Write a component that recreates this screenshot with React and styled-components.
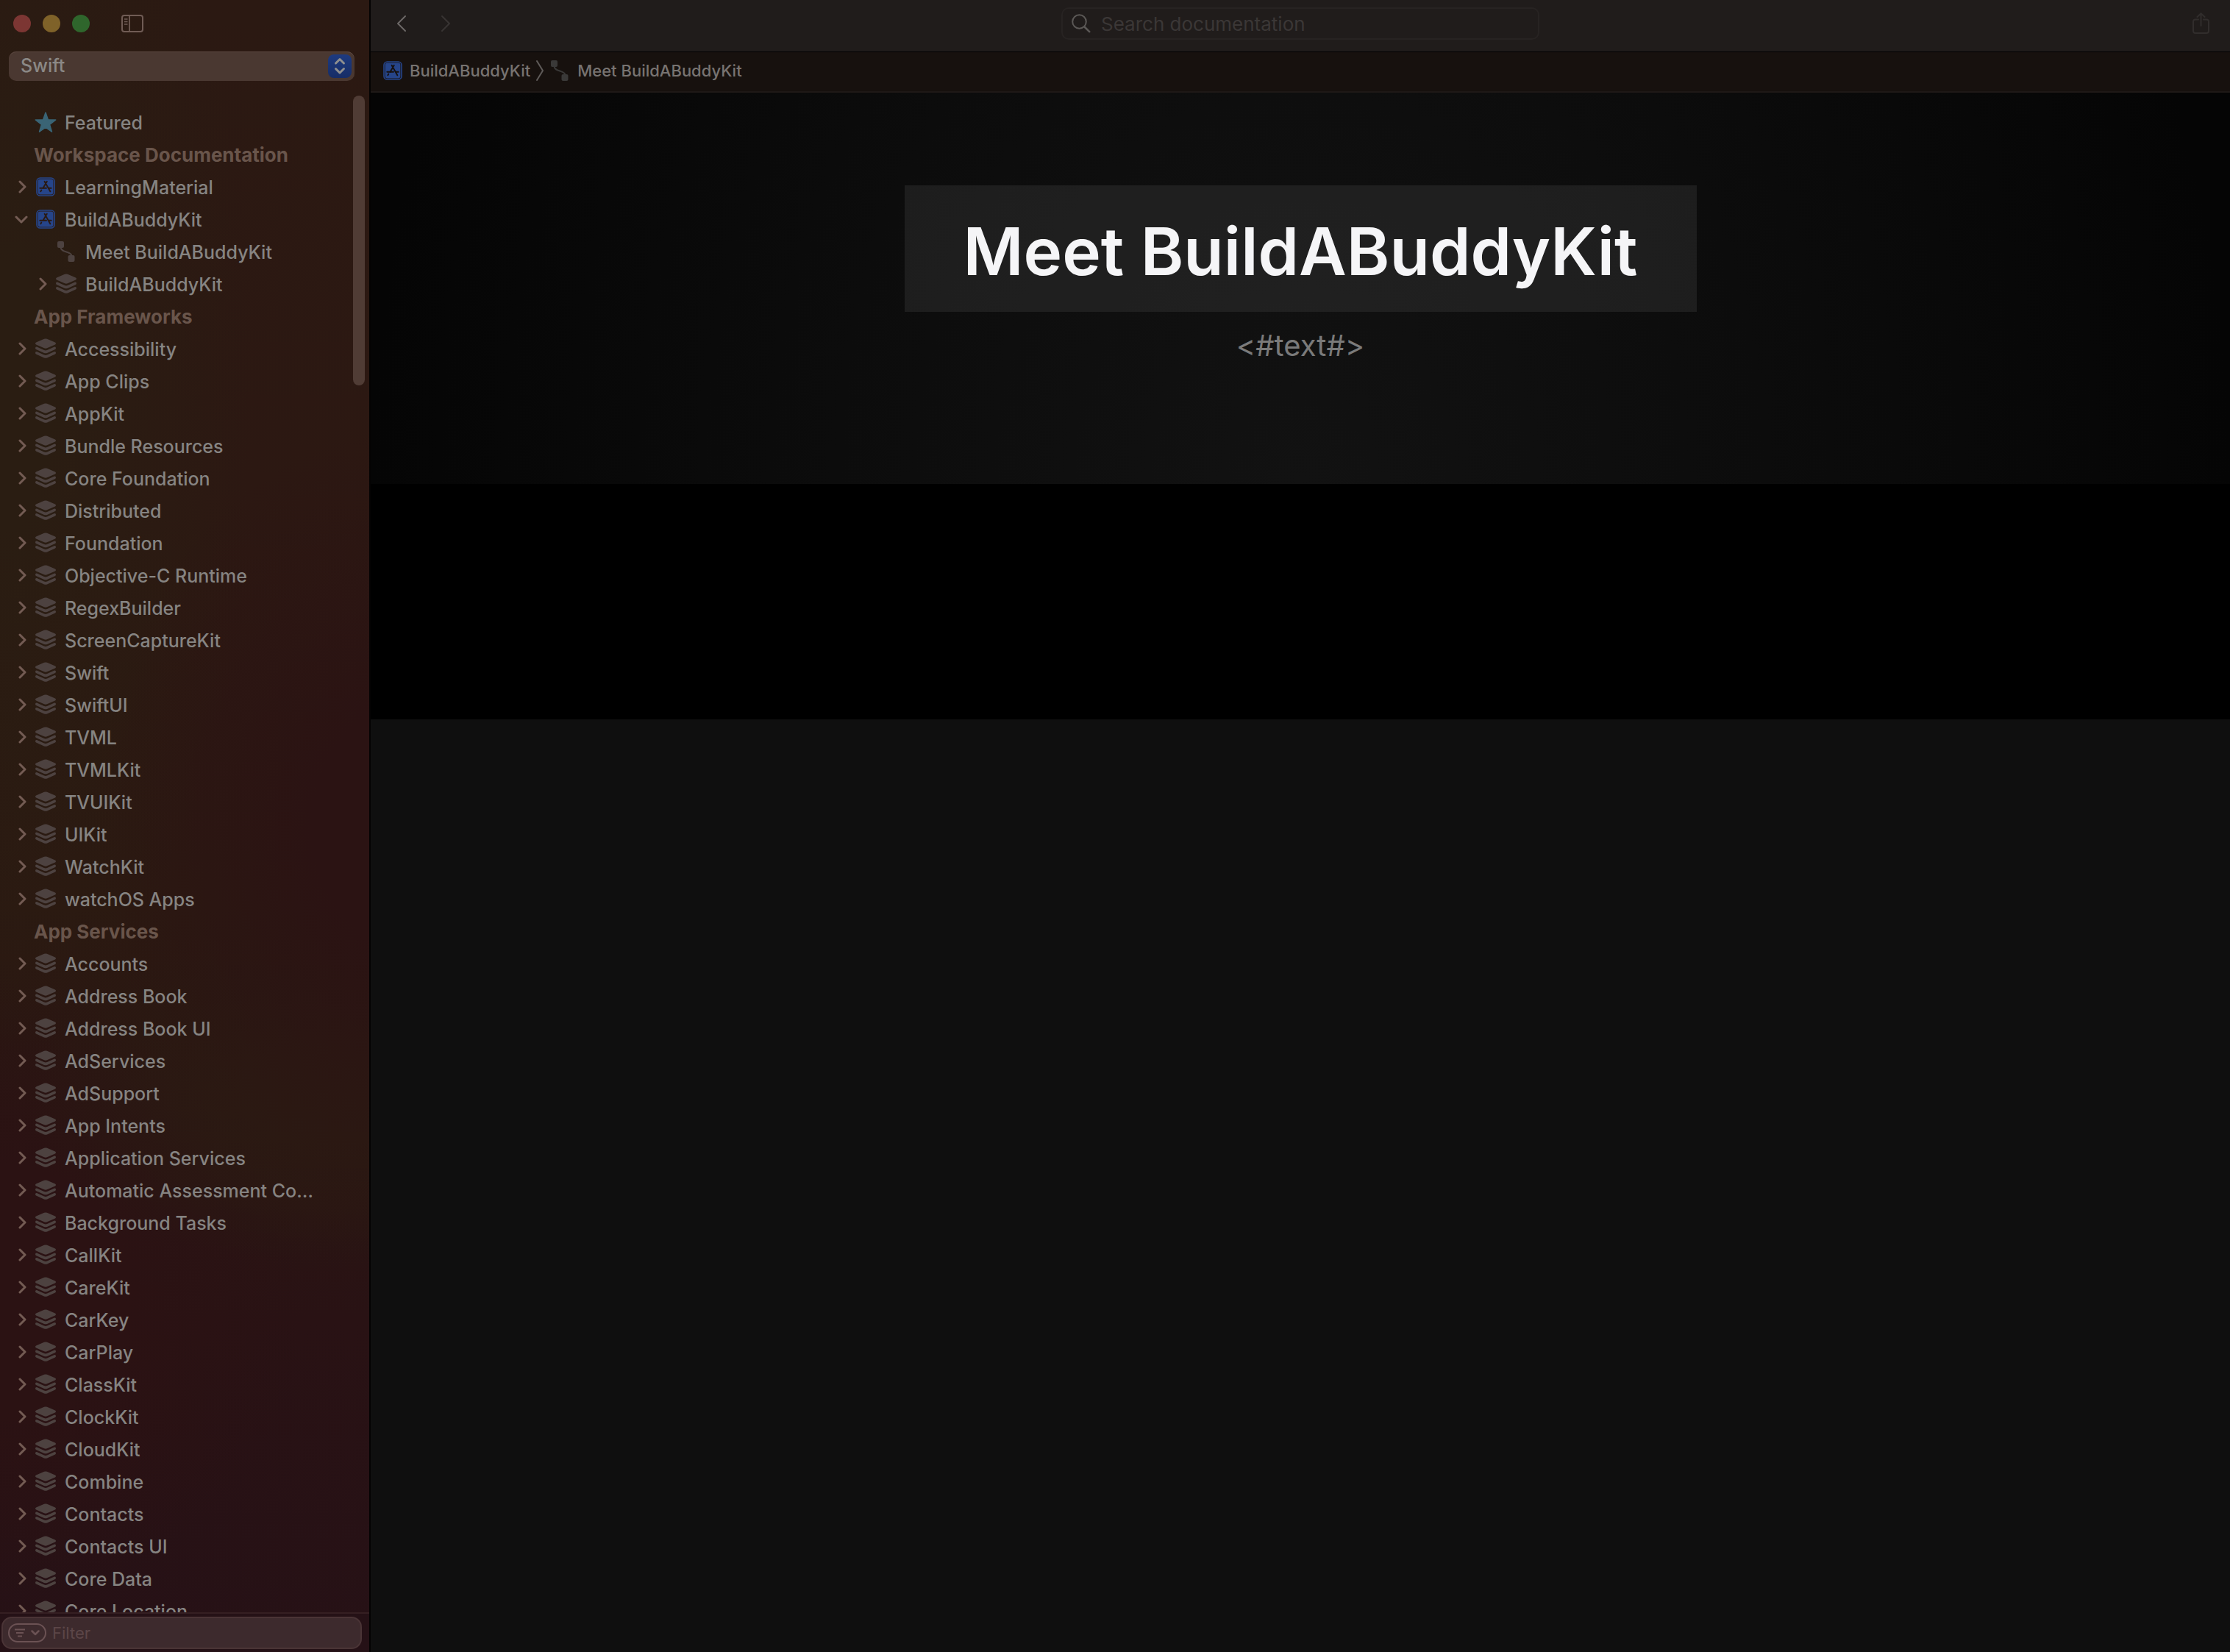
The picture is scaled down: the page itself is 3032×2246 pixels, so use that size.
import React from "react";
import styled, { createGlobalStyle } from "styled-components";

const Global = createGlobalStyle`
  * { box-sizing: border-box; }
  body { margin: 0; background: #0f0f0f; font-family: Inter, "Liberation Sans", sans-serif; }
  button, input, select { font: inherit; color: inherit; }
  ul { list-style: none; margin: 0; padding: 0; }
`;

const Window = styled.div`
  display: grid;
  grid-template-columns: 504px minmax(0, 1fr);
  height: 100vh;
  overflow: hidden;
`;

const Sidebar = styled.aside`
  display: flex;
  flex-direction: column;
  min-height: 0;
  border-right: 2px solid #040303;
  background:
    radial-gradient(ellipse 420px 540px at 110% 50%, #2b1313 30%, transparent 100%),
    radial-gradient(ellipse 420px 240px at 90% 66%, #2b1a12 30%, transparent 100%),
    radial-gradient(ellipse 420px 420px at 0% 78%, #2b1213 40%, transparent 100%),
    radial-gradient(ellipse 340px 900px at 0% 24%, #2a1d12 20%, transparent 100%),
    linear-gradient(180deg, #2b1912 0%, #2c1812 30%, #2b1911 55%, #2a1612 66%, #291214 80%, #261116 100%);
`;

const TitleBar = styled.div`
  display: flex;
  align-items: center;
  height: 64px;
  padding-left: 18px;
  gap: 16px;
`;

const Light = styled.button`
  width: 24px;
  height: 24px;
  padding: 0;
  border: 0;
  border-radius: 50%;
  background: ${(p) => p.$color};
`;

const IconButton = styled.button`
  display: flex;
  align-items: center;
  justify-content: center;
  padding: 0;
  border: 0;
  background: none;
  color: ${(p) => p.$color};
  margin-left: ${(p) => p.$push || 0}px;
`;

const LanguagePicker = styled.div`
  display: grid;
  height: 40px;
  margin: 6px 20px 0 12px;
  flex: none;
`;

const LanguageSelect = styled.select`
  grid-area: 1 / 1;
  appearance: none;
  width: 100%;
  height: 40px;
  padding: 0 60px 2px 16px;
  border: 0;
  border-radius: 10px;
  background: #4a3831;
  box-shadow: inset 0 1px 0 #5d4942;
  color: #8b8886;
  font-size: 25px;
  font-weight: 500;
`;

const Stepper = styled.span`
  grid-area: 1 / 1;
  justify-self: end;
  align-self: center;
  display: flex;
  align-items: center;
  justify-content: center;
  width: 32px;
  height: 32px;
  margin-right: 4px;
  border-radius: 8px;
  background: linear-gradient(#1d3a80, #172d66);
  pointer-events: none;
`;

const Scroller = styled.nav`
  position: relative;
  flex: 1;
  min-height: 0;
  margin-top: 20px;
  padding-top: 14px;
  overflow: hidden;
`;

const ScrollThumb = styled.span`
  position: absolute;
  top: 0;
  right: 6px;
  width: 16px;
  height: 394px;
  border-radius: 8px;
  background: #503c35;
`;

const Group = styled.h2`
  margin: 0;
  padding: 2px 0 0 46px;
  font-size: 26px;
  font-weight: 700;
  line-height: 42px;
  color: #69554b;
`;

const Row = styled.li`
  display: grid;
  grid-template-columns: 20px 28px minmax(0, 1fr);
  align-items: center;
  justify-items: center;
  column-gap: 8px;
  height: 44px;
  padding-left: ${(p) => 20 + p.$level * 28}px;
  padding-right: 68px;
`;

const Disclosure = styled.button`
  display: flex;
  justify-content: center;
  width: 20px;
  padding: 0;
  border: 0;
  background: none;
  color: #735b53;
`;

const RowLink = styled.a`
  justify-self: stretch;
  padding: 2px 0 0 4px;
  overflow: hidden;
  text-overflow: ellipsis;
  white-space: nowrap;
  text-decoration: none;
  color: #868482;
  font-size: 25px;
  font-weight: 500;
  line-height: 42px;
`;

const FilterBar = styled.div`
  flex: none;
  padding: 4px 10px 4px 2px;
  border-top: 2px solid #351f22;
  background: #251116;
`;

const FilterField = styled.div`
  display: flex;
  align-items: center;
  gap: 8px;
  height: 44px;
  padding-left: 7px;
  border: 2px solid #4a3436;
  border-radius: 14px;
  background: #3d2a2d;
`;

const FilterMenu = styled.button`
  display: flex;
  align-items: center;
  justify-content: center;
  gap: 8px;
  width: 52px;
  height: 26px;
  padding: 0;
  border: 2px solid #6b5254;
  border-radius: 13px;
  background: none;
  color: #6b5254;
`;

const TextInput = styled.input`
  flex: 1;
  min-width: 0;
  padding: 0;
  border: 0;
  outline: 0;
  background: none;
  font-size: ${(p) => p.$size}px;
  color: #868482;
  &::placeholder { color: ${(p) => p.$hint}; opacity: 1; }
`;

const Main = styled.main`
  display: flex;
  flex-direction: column;
  min-width: 0;
  background: #0f0f0f;
`;

const Toolbar = styled.header`
  display: grid;
  grid-template-columns: 1fr 650px 1fr;
  align-items: center;
  height: 71px;
  padding: 0 27px 6px;
  border-bottom: 1px solid #000;
  background: #201c1b;
`;

const NavButtons = styled.div`
  display: flex;
  gap: 46px;
  padding-left: 8px;
`;

const SearchField = styled.label`
  display: flex;
  align-items: center;
  gap: 14px;
  height: 44px;
  padding: 0 12px;
  border: 2px solid #272322;
  border-radius: 10px;
`;

const ToolbarEnd = styled.div`
  display: flex;
  justify-content: flex-end;
`;

const Breadcrumbs = styled.nav`
  display: flex;
  align-items: center;
  height: 55px;
  padding: 0 17px 4px;
  gap: 8px;
  border-bottom: 2px solid #1f1917;
  background: #17110e;
  color: #5f5b59;
`;

const Crumb = styled.a`
  display: flex;
  align-items: center;
  gap: 10px;
  text-decoration: none;
  color: #777371;
  font-size: 22px;
  font-weight: 500;
  line-height: 28px;
`;

const Hero = styled.section`
  display: flex;
  flex-direction: column;
  align-items: center;
  height: 532px;
  padding-top: 126px;
  background: radial-gradient(ellipse 50% 300% at 50% 100%, #121212 0%, #0c0c0c 50%, #050505 100%);
`;

const Title = styled.h1`
  margin: 0;
  padding: 32px 80px 24px;
  background: rgba(255, 255, 255, 0.07);
  color: #f5f5f7;
  font-size: 89px;
  font-weight: 600;
  line-height: 116px;
  white-space: nowrap;
`;

const Intro = styled.p`
  margin: 18px 0 0;
  color: #7a7a7a;
  font-size: 40px;
  line-height: 56px;
`;

const Band = styled.div`
  height: 320px;
  background: #000;
`;

const Chevron = ({ w, h, d, sw = 3 }) => (
  <svg width={w} height={h} viewBox={`0 0 ${w} ${h}`} fill="none" stroke="currentColor" strokeWidth={sw} strokeLinecap="round" strokeLinejoin="round" aria-hidden="true">
    <path d={d} />
  </svg>
);

const StarIcon = () => (
  <svg width="30" height="28" viewBox="0 0 30 28" aria-hidden="true">
    <path d="M15 1l3.4 9.700 10.300.3-8.200 6.300 3 9.800L15 21.200l-8.500 5.900 3-9.800L1.300 11l10.300-.3z" fill="#3a6475" stroke="#3a6475" strokeWidth="1.500" strokeLinejoin="round" />
  </svg>
);

const StackIcon = () => (
  <svg width="28" height="28" viewBox="0 0 28 28" fill="#4d4240" aria-hidden="true">
    <path d="M12 .8Q14 0 16 .8L27 5.500Q29 7 27 8.500L16 13.300Q14 14.200 12 13.300L1 8.500Q-1 7 1 5.500z" />
    <path d="M0 13Q.2 11.600 2 11.600L12 16Q14 16.900 16 16L26 11.600Q27.800 11.600 28 13Q28 14.400 27 15L16 19.900Q14 20.800 12 19.900L1 15Q0 14.400 0 13z" />
    <path d="M0 19.500Q.2 18.100 2 18.100L12 22.500Q14 23.400 16 22.500L26 18.100Q27.800 18.100 28 19.500Q28 20.900 27 21.500L16 26.400Q14 27.300 12 26.400L1 21.500Q0 20.900 0 19.500z" />
  </svg>
);

const AppIcon = ({ hole = "#2a1a13" }) => (
  <svg width="26" height="26" viewBox="0 0 26 26" aria-hidden="true">
    <rect x="1" y="1" width="24" height="24" rx="4.500" fill={hole} stroke="#26458a" strokeWidth="1.600" />
    <rect x="2.600" y="2.600" width="20.800" height="20.800" rx="2.800" fill="#26458a" />
    <g stroke={hole} strokeWidth="1.900" strokeLinecap="round" fill="none">
      <path d="M14.800 5.800L9.300 15M11.600 5.800L19.300 19.300M5.300 14.800H14M17.500 14.800H20.700M7.300 17.500L6.300 19.200" />
    </g>
  </svg>
);

const PathIcon = ({ color = "#4d4240" }) => (
  <svg width="28" height="28" viewBox="0 0 28 28" aria-hidden="true">
    <rect x="2" y="0" width="9" height="9" rx="2" fill={color} />
    <rect x="16.500" y="19" width="9" height="9" rx="2" fill={color} />
    <path d="M6.500 8c0 8 14.500 5 15 12" fill="none" stroke={color} strokeWidth="2" />
  </svg>
);

const SidebarIcon = () => (
  <svg width="30" height="24" viewBox="0 0 30 24" fill="none" stroke="currentColor" aria-hidden="true">
    <rect x="1" y="1" width="28" height="22" rx="3" strokeWidth="2" />
    <path d="M11 1v22" strokeWidth="1.800" />
    <path d="M4 6h4.500M4 9.500h4.500M4 13h4.500" strokeWidth="1.400" />
  </svg>
);

const SearchIcon = () => (
  <svg width="26" height="26" viewBox="0 0 26 26" fill="none" stroke="#5b5856" strokeLinecap="round" aria-hidden="true">
    <circle cx="10.500" cy="10.500" r="9.300" strokeWidth="2" />
    <path d="M17.500 17.500l6.700 6.700" strokeWidth="2.600" />
  </svg>
);

const ShareIcon = () => (
  <svg width="24" height="30" viewBox="0 0 24 30" fill="none" stroke="currentColor" strokeWidth="2" strokeLinecap="round" strokeLinejoin="round" aria-hidden="true">
    <path d="M8 9.500H4a3 3 0 0 0-3 3V25a3 3 0 0 0 3 3h15a3 3 0 0 0 3-3V12.500a3 3 0 0 0-3-3h-4M11.500 18V1.500M6.500 6l5-4.800 5 4.800" />
  </svg>
);

const StepperIcon = () => (
  <svg width="16" height="24" viewBox="0 0 16 24" fill="none" stroke="#8f8f8f" strokeWidth="3" strokeLinecap="round" strokeLinejoin="round" aria-hidden="true">
    <path d="M2.500 8L8 2.500 13.500 8M2.500 15.500L8 21l5.500-5.500" />
  </svg>
);

const ICONS = { star: StarIcon, stack: StackIcon, app: AppIcon, path: PathIcon };

const frameworks = (text) => text.split("|").map((name) => ({ name, icon: "stack", fold: "closed" }));

const SECTIONS = [
  { items: [{ name: "Featured", icon: "star" }] },
  {
    title: "Workspace Documentation",
    items: [
      { name: "LearningMaterial", icon: "app", fold: "closed" },
      { name: "BuildABuddyKit", icon: "app", fold: "open" },
      { name: "Meet BuildABuddyKit", icon: "path", level: 1 },
      { name: "BuildABuddyKit", icon: "stack", fold: "closed", level: 1 },
    ],
  },
  {
    title: "App Frameworks",
    items: frameworks("Accessibility|App Clips|AppKit|Bundle Resources|Core Foundation|Distributed|Foundation|Objective-C Runtime|RegexBuilder|ScreenCaptureKit|Swift|SwiftUI|TVML|TVMLKit|TVUIKit|UIKit|WatchKit|watchOS Apps"),
  },
  {
    title: "App Services",
    items: frameworks("Accounts|Address Book|Address Book UI|AdServices|AdSupport|App Intents|Application Services|Automatic Assessment Configuration|Background Tasks|CallKit|CareKit|CarKey|CarPlay|ClassKit|ClockKit|CloudKit|Combine|Contacts|Contacts UI|Core Data|Core Location"),
  },
];

function TreeRow({ item }) {
  const Icon = ICONS[item.icon];
  const open = item.fold === "open";
  return (
    <Row $level={item.level || 0}>
      {item.fold ? (
        <Disclosure aria-label={`Toggle ${item.name}`} aria-expanded={open}>
          <Chevron w={20} h={18} d={open ? "M2 6l7 7 7-7" : "M7 2l7 7-7 7"} />
        </Disclosure>
      ) : (
        <span />
      )}
      <Icon />
      <RowLink href="#">{item.name}</RowLink>
    </Row>
  );
}

export default function App() {
  return (
    <>
      <Global />
      <Window>
        <Sidebar>
          <TitleBar>
            <Light $color="#7c3633" aria-label="Close" />
            <Light $color="#7f6229" aria-label="Minimize" />
            <Light $color="#2f662c" aria-label="Zoom" />
            <IconButton $color="#705c55" $push={27} aria-label="Toggle sidebar"><SidebarIcon /></IconButton>
          </TitleBar>
          <LanguagePicker>
            <LanguageSelect aria-label="Language" defaultValue="Swift">
              <option>Swift</option>
            </LanguageSelect>
            <Stepper><StepperIcon /></Stepper>
          </LanguagePicker>
          <Scroller aria-label="Documentation">
            {SECTIONS.map((s, i) => (
              <section key={i}>
                {s.title && <Group>{s.title}</Group>}
                <ul>{s.items.map((item, j) => <TreeRow key={j} item={item} />)}</ul>
              </section>
            ))}
            <ScrollThumb />
          </Scroller>
          <FilterBar>
            <FilterField>
              <FilterMenu aria-label="Filter options">
                <svg width="14" height="12" viewBox="0 0 14 12" stroke="currentColor" strokeWidth="2" aria-hidden="true"><path d="M0 1.500h14M2 6h10M4 10.500h6" /></svg>
                <Chevron w={12} h={8} d="M1.500 1.500L6 6l4.500-4.500" sw={2.5} />
              </FilterMenu>
              <TextInput $size={22} $hint="#5c4648" placeholder="Filter" aria-label="Filter" />
            </FilterField>
          </FilterBar>
        </Sidebar>
        <Main>
          <Toolbar>
            <NavButtons>
              <IconButton $color="#6b6766" aria-label="Back"><Chevron w={14} h={24} sw={2} d="M12 2L2 12l10 10" /></IconButton>
              <IconButton $color="#383433" aria-label="Forward"><Chevron w={14} h={24} sw={2} d="M2 2l10 10L2 22" /></IconButton>
            </NavButtons>
            <SearchField>
              <SearchIcon />
              <TextInput $size={26} $hint="#3b3736" placeholder="Search documentation" aria-label="Search documentation" />
            </SearchField>
            <ToolbarEnd>
              <IconButton $color="#312d2c" aria-label="Share"><ShareIcon /></IconButton>
            </ToolbarEnd>
          </Toolbar>
          <Breadcrumbs aria-label="Breadcrumb">
            <Crumb href="#"><AppIcon hole="#17110e" />BuildABuddyKit</Crumb>
            <Chevron w={10} h={28} sw={2} d="M1 1l8 13-8 13" />
            <Crumb href="#"><PathIcon color="#3a3938" />Meet BuildABuddyKit</Crumb>
          </Breadcrumbs>
          <Hero>
            <Title>Meet BuildABuddyKit</Title>
            <Intro>&lt;#text#&gt;</Intro>
          </Hero>
          <Band />
        </Main>
      </Window>
    </>
  );
}
